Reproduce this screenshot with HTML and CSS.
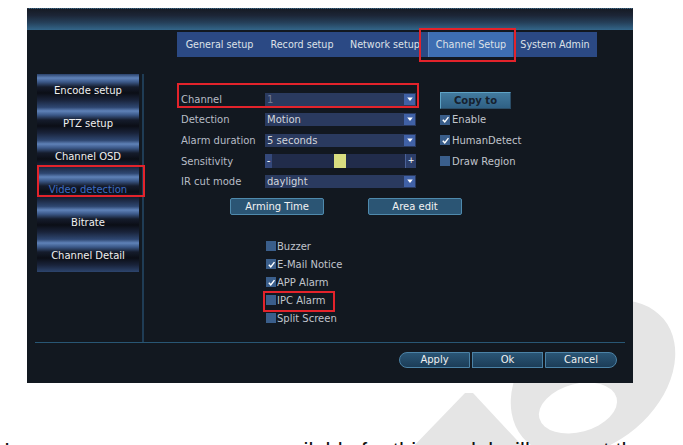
FILE: index.html
```html
<!DOCTYPE html>
<html lang="en">
<head>
    <meta charset="UTF-8">
    <meta name="viewport" content="width=device-width, initial-scale=1.0">
    <title>Channel Setup - Video detection</title>
    <link rel="stylesheet" href="styles.css">
</head>
<body>
    <!-- page watermark, sits behind the screenshot -->
    <svg class="watermark" width="683" height="445" viewBox="0 0 683 445">
        <ellipse cx="593" cy="378" rx="92" ry="66" transform="rotate(-40 593 378)" fill="#e5e5e5"/>
        <ellipse cx="578" cy="408" rx="40" ry="24" transform="rotate(-15 578 408)" fill="#fff"/>
        <polygon points="465,393 473,393 528,452 408,452" fill="#e5e5e5"/>
    </svg>

    <div class="screen">
        <div class="title-bar"></div>

        <div class="tab-bar">
            <div class="tab">General setup</div>
            <div class="tab">Record setup</div>
            <div class="tab">Network setup</div>
            <div class="tab active">Channel Setup</div>
            <div class="tab">System Admin</div>
        </div>

        <div class="main">
            <div class="side-menu">
                <div class="menu-btn">Encode setup</div>
                <div class="menu-btn">PTZ setup</div>
                <div class="menu-btn">Channel OSD</div>
                <div class="menu-btn current">Video detection</div>
                <div class="menu-btn">Bitrate</div>
                <div class="menu-btn">Channel Detail</div>
            </div>

            <div class="content">
                <div class="form-grid">
                    <span class="label">Channel</span>
                    <div class="select disabled">
                        <span>1</span>
                        <i class="arrow"><svg viewBox="0 0 10 8"><path d="M1.5 1.5H8.5L5 6Z" fill="#fff"/></svg></i>
                    </div>
                    <div class="side-item"><button class="copy-btn">Copy to</button></div>

                    <span class="label">Detection</span>
                    <div class="select">
                        <span>Motion</span>
                        <i class="arrow"><svg viewBox="0 0 10 8"><path d="M1.5 1.5H8.5L5 6Z" fill="#fff"/></svg></i>
                    </div>
                    <label class="check side-item">
                        <span class="box"><svg viewBox="0 0 10 10"><path d="M2 5.2L4.2 7.6L8.3 2.4" stroke="#fff" stroke-width="1.6" fill="none"/></svg></span>Enable
                    </label>

                    <span class="label">Alarm duration</span>
                    <div class="select">
                        <span>5 seconds</span>
                        <i class="arrow"><svg viewBox="0 0 10 8"><path d="M1.5 1.5H8.5L5 6Z" fill="#fff"/></svg></i>
                    </div>
                    <label class="check side-item">
                        <span class="box"><svg viewBox="0 0 10 10"><path d="M2 5.2L4.2 7.6L8.3 2.4" stroke="#fff" stroke-width="1.6" fill="none"/></svg></span>HumanDetect
                    </label>

                    <span class="label">Sensitivity</span>
                    <div class="slider">
                        <span class="minus">-</span>
                        <span class="track"></span>
                        <span class="plus">+</span>
                        <span class="knob"></span>
                    </div>
                    <label class="check side-item">
                        <span class="box"></span>Draw Region
                    </label>

                    <span class="label">IR cut mode</span>
                    <div class="select">
                        <span>daylight</span>
                        <i class="arrow"><svg viewBox="0 0 10 8"><path d="M1.5 1.5H8.5L5 6Z" fill="#fff"/></svg></i>
                    </div>
                    <span></span>
                </div>

                <div class="btn-row">
                    <button class="action-btn">Arming Time</button>
                    <button class="action-btn">Area edit</button>
                </div>

                <div class="check-list">
                    <label class="check"><span class="box"></span>Buzzer</label>
                    <label class="check"><span class="box"><svg viewBox="0 0 10 10"><path d="M2 5.2L4.2 7.6L8.3 2.4" stroke="#fff" stroke-width="1.6" fill="none"/></svg></span>E-Mail Notice</label>
                    <label class="check"><span class="box"><svg viewBox="0 0 10 10"><path d="M2 5.2L4.2 7.6L8.3 2.4" stroke="#fff" stroke-width="1.6" fill="none"/></svg></span>APP Alarm</label>
                    <label class="check"><span class="box"></span>IPC Alarm</label>
                    <label class="check"><span class="box"></span>Split Screen</label>
                </div>
            </div>
        </div>

        <div class="footer">
            <button class="foot-btn first">Apply</button>
            <button class="foot-btn">Ok</button>
            <button class="foot-btn last">Cancel</button>
        </div>

        <!-- red annotation boxes -->
        <div class="mark mark-tab"></div>
        <div class="mark mark-menu"></div>
        <div class="mark mark-channel"></div>
        <div class="mark mark-ipc"></div>
    </div>

    <p class="note">In some cases, no camera available for this model will support the</p>
</body>
</html>
```

FILE: styles.css
```css
html, body{
    margin: 0;
    padding: 0;
    overflow: hidden;
    background: #fff;
}
body{
    position: relative;
    width: 683px;
    height: 445px;
}
.watermark{
    position: absolute;
    left: 0;
    top: 0;
    z-index: 0;
}
.screen{
    position: relative;
    z-index: 1;
    margin: 8px 0 0 27px;
    width: 606px;
    height: 375px;
    background: #121820;
    font-family: "DejaVu Sans", sans-serif;
    font-size: 10px;
    color: #bcc0c8;
}
button{
    font-family: "DejaVu Sans", sans-serif;
    font-size: 10px;
    padding: 0;
    cursor: pointer;
}

/* header + tabs */
.title-bar{
    height: 22px;
    border-top: 1px dotted #2c3440;
    box-sizing: border-box;
    background: linear-gradient(#161b25, #1c2536 30%, #25405a 65%, #33668a);
}
.tab-bar{
    display: grid;
    grid-template-columns: 85px 80px 86px 85px 84px;
    margin: 2px 0 0 150px;
    width: 420px;
    height: 25px;
    background: #2b4984;
}
.tab{
    line-height: 25px;
    text-align: center;
    font-size: 9.6px;
    color: #dde1e8;
    white-space: nowrap;
}
.tab.active{
    background: #3e6eb2;
    border-left: 1px solid #5a86c0;
}

/* left menu */
.main{
    display: flex;
    margin-top: 17px;
    height: 268px;
}
.side-menu{
    margin-left: 10px;
    width: 102px;
}
.menu-btn{
    height: 33px;
    line-height: 33px;
    text-align: center;
    color: #f0f0f0;
    white-space: nowrap;
    background: linear-gradient(#2a416a 0px, #5f82b8 4px, #3b5888 8px, #151c2c 13px, #0b0e16 19px, #19233a 26px, #2d456e 33px);
}
.menu-btn.current{
    color: #3c6cc4;
}

/* form */
.content{
    flex: 1;
    margin-left: 3px;
    border-left: 2px solid #1f3c55;
    padding: 15px 0 0 37px;
}
.form-grid{
    display: grid;
    grid-template-columns: 84px 151px auto;
    grid-auto-rows: 20.6px;
    align-items: center;
}
.label{
    color: #b7bcc6;
    white-space: nowrap;
}
.side-item{
    margin-left: 24px;
}
.select{
    display: flex;
    align-items: center;
    justify-content: space-between;
    height: 13px;
    padding-left: 2px;
    background-color: #25355b;
    background-image: radial-gradient(rgba(255,255,255,0.05) 0.6px, transparent 0.8px);
    background-size: 2px 2px;
    color: #d2d5db;
}
.select.disabled{
    color: #707995;
}
.arrow{
    display: flex;
    align-items: center;
    justify-content: center;
    width: 11px;
    height: 11px;
    margin-right: 1px;
    background: #4061a6;
}
.arrow svg{
    width: 8px;
    height: 7px;
}
.slider{
    position: relative;
    display: flex;
    height: 14px;
    background: #1c2747;
    color: #fff;
}
.minus{
    width: 7px;
    text-align: center;
    line-height: 14px;
    background: #34487a;
}
.track{
    flex: 1;
    background-image: radial-gradient(rgba(255,255,255,0.05) 0.6px, transparent 0.8px);
    background-size: 2px 2px;
}
.plus{
    width: 10px;
    text-align: center;
    line-height: 14px;
    font-size: 8px;
    background: #2c3e6a;
    border-left: 1px solid #4a6198;
}
.knob{
    position: absolute;
    left: 69px;
    top: 0;
    width: 12px;
    height: 14px;
    background: #d8dd80;
}
.copy-btn{
    width: 71px;
    height: 17px;
    margin-top: 2px;
    background: linear-gradient(#427a9e, #2f6084);
    border: 1px solid #5ea3c6;
    border-right-color: #2a4c66;
    border-bottom-color: #2a4c66;
    color: #16212f;
    font-weight: bold;
}
.check{
    display: flex;
    align-items: center;
    gap: 2px;
    color: #c0c4cc;
    white-space: nowrap;
}
.box{
    display: flex;
    align-items: center;
    justify-content: center;
    width: 10px;
    height: 10px;
    background: #3a5e8b;
}
.box svg{
    width: 9px;
    height: 9px;
}
.btn-row{
    display: flex;
    gap: 44px;
    margin: 6px 0 0 49px;
}
.action-btn{
    width: 94px;
    height: 17px;
    background-color: #24506f;
    background-image: radial-gradient(rgba(255,255,255,0.07) 0.6px, transparent 0.8px);
    background-size: 2px 2px;
    border: 1px solid #4f8aad;
    border-radius: 2px;
    color: #f2f2f2;
}
.check-list{
    display: grid;
    grid-auto-rows: 18px;
    align-items: center;
    margin: 22.5px 0 0 85px;
}
.check-list .check{
    gap: 1px;
}

/* bottom buttons */
.footer{
    display: flex;
    justify-content: flex-end;
    gap: 2px;
    margin: 0 8px;
    padding: 8.5px 8px 0 0;
    border-top: 1.5px solid #285674;
}
.foot-btn{
    width: 71px;
    height: 16px;
    background: linear-gradient(#2a5575, #1c3d58);
    border: 1px solid #4b82a6;
    color: #f0f0f0;
}
.foot-btn.first{
    border-radius: 8px 0 0 8px;
}
.foot-btn.last{
    width: 72px;
    border-radius: 0 8px 8px 0;
}

/* annotation boxes */
.mark{
    position: absolute;
    box-sizing: border-box;
    border: 2px solid #e3232b;
}
.mark-tab{
    left: 392px;
    top: 20px;
    width: 97px;
    height: 34px;
}
.mark-menu{
    left: 10px;
    top: 157px;
    width: 108px;
    height: 32px;
}
.mark-channel{
    left: 150px;
    top: 75px;
    width: 242px;
    height: 25px;
}
.mark-ipc{
    left: 236px;
    top: 283px;
    width: 72px;
    height: 21px;
}

.note{
    position: relative;
    z-index: 1;
    margin: 55px 0 0 4px;
    font-family: "Liberation Sans", sans-serif;
    font-size: 22px;
    line-height: 26px;
    white-space: nowrap;
    color: #111;
}
```
